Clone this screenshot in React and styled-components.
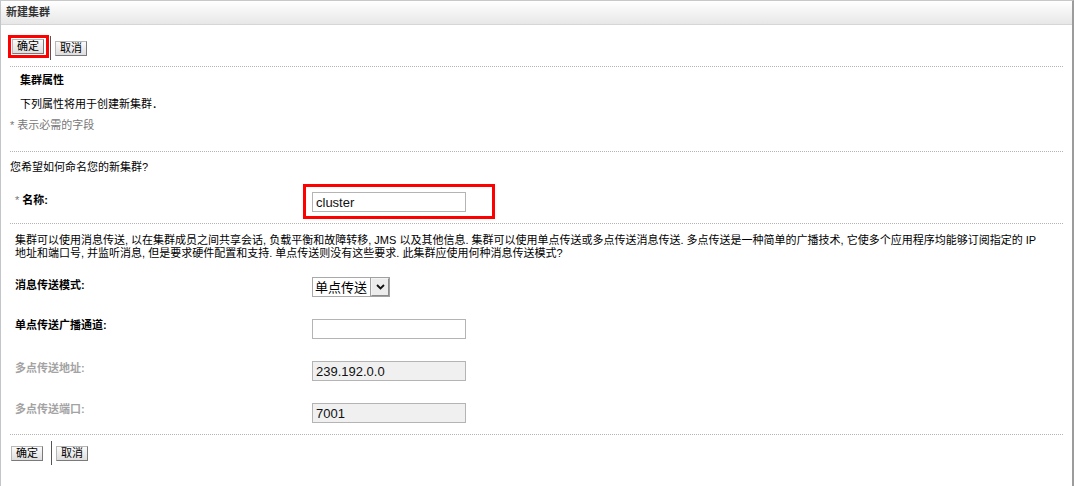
import React from "react";
import styled, { createGlobalStyle } from "styled-components";

const Global = createGlobalStyle`
  html, body { margin: 0; padding: 0; background: #fff; }
  body {
    font-family: "Liberation Sans", "Noto Sans CJK SC", sans-serif;
    font-size: 11px;
    color: #000;
  }
`;

const Frame = styled.div`
  width: 1074px;
  height: 486px;
  box-sizing: border-box;
  overflow: hidden;
  border-top: 1px solid #c8c8c8;
  border-left: 1px solid #c2c6ca;
  border-right: 2px solid #9c9c9c;
  background: #fff;
`;

const Header = styled.div`
  height: 23px;
  line-height: 23px;
  border-bottom: 1px solid #d6d6d6;
  background: linear-gradient(#ffffff, #e7e7e7);
  padding-left: 5px;
  font-weight: 700;
  color: #333;
`;

const Toolbar = styled.div`
  display: flex;
  align-items: center;
  height: 26px;
  margin-top: ${(p) => p.$top}px;
  padding-left: ${(p) => p.$left}px;
`;

const Highlight = styled.div`
  display: inline-flex;
  justify-self: start;
  align-self: start;
  border: 3px solid #ff0000;
  padding: ${(p) => p.$pad};
  line-height: 0;
`;

const Button = styled.button`
  width: 32px;
  height: 15px;
  padding: 0;
  margin: 0;
  font-family: "Liberation Sans", "Noto Sans CJK SC", sans-serif;
  font-size: 11px;
  line-height: 13px;
  color: #000;
  border: 1px solid;
  border-color: #b8b8b8 #7a7a7a #7a7a7a #b8b8b8;
  background: linear-gradient(#fbfbfb, #dedede);
  cursor: pointer;
`;

const Separator = styled.span`
  width: 1px;
  height: 24px;
  background: #555;
  margin-left: ${(p) => p.$left}px;
  margin-right: 4px;
`;

const Divider = styled.div`
  margin: ${(p) => p.$top}px 9px 0 9px;
  border-top: 1px dotted #b4b4b4;
`;

const Line = styled.div`
  margin-top: ${(p) => p.$top}px;
  padding-left: ${(p) => p.$left}px;
  line-height: 14px;
  font-weight: ${(p) => (p.$bold ? 700 : 400)};
  color: ${(p) => p.$color || "#000"};
`;

const Req = styled.span`
  color: #777;
  font-weight: 400;
`;

const Paragraph = styled.p`
  margin: 10px 0 0 0;
  padding-left: 14px;
  line-height: 13px;
  white-space: nowrap;
`;

const FormRow = styled.div`
  display: grid;
  grid-template-columns: ${(p) => p.$label}px auto;
  justify-content: start;
  align-items: start;
  padding-left: 14px;
  margin-top: ${(p) => p.$top}px;
`;

const Label = styled.div`
  line-height: 14px;
  padding-top: ${(p) => p.$pad || 0}px;
  font-weight: 700;
  color: ${(p) => (p.$disabled ? "#a3a3a3" : "#000")};
`;

const Rows = styled.div`
  display: flex;
  flex-direction: column;
  gap: 21px;
  margin-top: 17px;
`;

const Field = styled.div`
  display: flex;
  justify-self: start;
  margin-top: ${(p) => p.$top || 0}px;
`;

const TextInput = styled.input`
  box-sizing: border-box;
  width: 154px;
  height: 20px;
  margin: 0;
  padding: 0 3px;
  font-family: "Liberation Sans", Arial, sans-serif;
  font-size: 13px;
  color: #111;
  border: 1px solid #b4b4b4;
  background: ${(p) => (p.disabled ? "#f0f0f0" : "#fff")};
  outline: none;
`;

const SelectBox = styled.div`
  box-sizing: border-box;
  display: flex;
  align-items: stretch;
  width: 78px;
  height: 20px;
  border: 1px solid #a9a9a9;
  background: #fff;
`;

const SelectText = styled.span`
  flex: 1;
  line-height: 18px;
  padding-left: 2px;
  font-family: "Noto Sans CJK SC", sans-serif;
  font-size: 13px;
  color: #000;
`;

const ArrowButton = styled.span`
  box-sizing: border-box;
  width: 18px;
  display: flex;
  align-items: center;
  justify-content: center;
  border: 1px solid;
  border-color: #f4f4f4 #8a8a8a #8a8a8a #f4f4f4;
  background: #ececec;
  outline: 1px solid #a0a0a0;
`;

export default function App() {
  return (
    <>
      <Global />
      <Frame>
        <Header>新建集群</Header>

        <Toolbar $top={10} $left={7}>
          <Highlight $pad="1px 2px 1px 1px">
            <Button>确定</Button>
          </Highlight>
          <Separator $left={1} />
          <Button>取消</Button>
        </Toolbar>

        <Divider $top={5} />
        <Line $top={6} $left={19} $bold>
          集群属性
        </Line>
        <Line $top={10} $left={19}>
          下列属性将用于创建新集群．
        </Line>
        <Line $top={7} $left={9} $color="#777">
          * 表示必需的字段
        </Line>

        <Divider $top={19} />
        <Line $top={8} $left={9}>
          您希望如何命名您的新集群?
        </Line>

        <FormRow $label={288} $top={10}>
          <Label $pad={9}>
            <Req>*</Req> 名称:
          </Label>
          <Highlight $pad="5px 26px 4px 6px">
            <TextInput defaultValue="cluster" />
          </Highlight>
        </FormRow>

        <Divider $top={4} />
        <Paragraph>
          集群可以使用消息传送, 以在集群成员之间共享会话, 负载平衡和故障转移, JMS 以及其他信息. 集群可以使用单点传送或多点传送消息传送. 多点传送是一种简单的广播技术, 它使多个应用程序均能够订阅指定的 IP
          <br />
          地址和端口号, 并监听消息, 但是要求硬件配置和支持. 单点传送则没有这些要求. 此集群应使用何种消息传送模式?
        </Paragraph>

        <Rows>
          <FormRow $label={297} $top={0}>
            <Label $pad={1}>消息传送模式:</Label>
            <Field>
              <SelectBox>
                <SelectText>单点传送</SelectText>
                <ArrowButton>
                  <svg width="9" height="6" viewBox="0 0 9 6">
                    <path d="M1 1 L4.5 4.5 L8 1" fill="none" stroke="#111" strokeWidth="1.8" />
                  </svg>
                </ArrowButton>
              </SelectBox>
            </Field>
          </FormRow>
          <FormRow $label={297} $top={0}>
            <Label>单点传送广播通道:</Label>
            <Field $top={1}>
              <TextInput defaultValue="" />
            </Field>
          </FormRow>
          <FormRow $label={297} $top={0}>
            <Label $pad={1} $disabled>多点传送地址:</Label>
            <Field $top={1}>
              <TextInput disabled defaultValue="239.192.0.0" />
            </Field>
          </FormRow>
          <FormRow $label={297} $top={0}>
            <Label $disabled>多点传送端口:</Label>
            <Field $top={1}>
              <TextInput disabled defaultValue="7001" />
            </Field>
          </FormRow>
        </Rows>

        <Divider $top={11} />
        <Toolbar $top={5} $left={10}>
          <Button>确定</Button>
          <Separator $left={8} />
          <Button>取消</Button>
        </Toolbar>
      </Frame>
    </>
  );
}
